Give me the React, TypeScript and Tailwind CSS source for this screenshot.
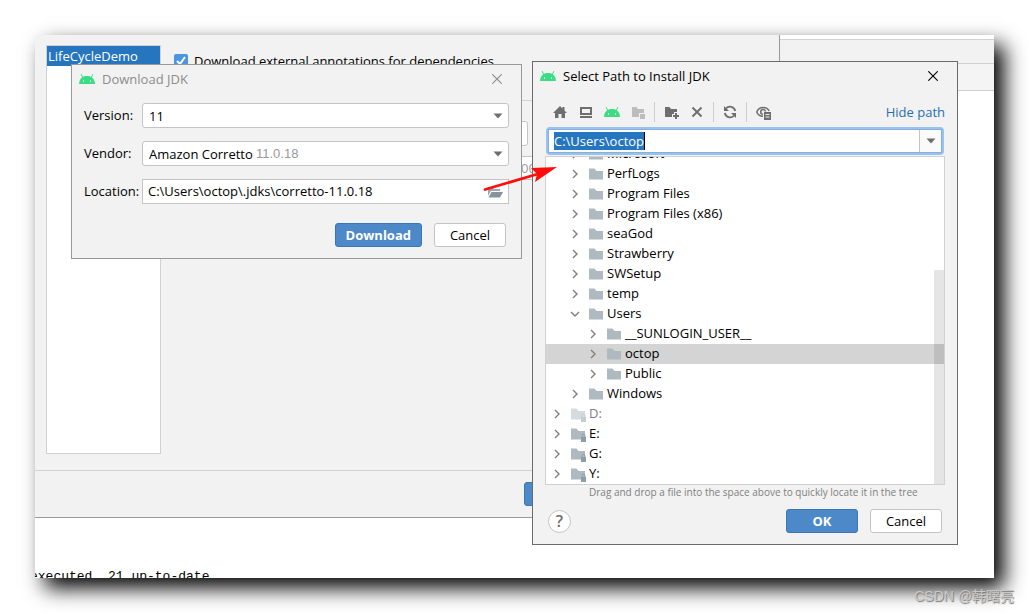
import React from "react";

type IconProps = { className?: string };

function AndroidIcon({ className = "" }: IconProps) {
  return (
    <svg viewBox="0 0 16 10" className={`h-[10px] w-4 shrink-0 ${className}`} aria-hidden="true">
      <path d="M0 10C.3 4.500 3.500 2 8 2S15.700 4.500 16 10z" fill="#3ddc84" />
      <path d="M4 4 2.300.5M12 4 13.700.5" stroke="#3ddc84" strokeWidth="1" strokeLinecap="round" />
      <circle cx="4.500" cy="7" r=".7" fill="#fff" />
      <circle cx="11.500" cy="7" r=".7" fill="#fff" />
    </svg>
  );
}

function CloseIcon() {
  return (
    <svg viewBox="0 0 10 10" className="size-[10px]" aria-hidden="true">
      <path d="M.3.3l9.400 9.400M9.700.3.3 9.700" stroke="currentColor" strokeWidth="1.100" />
    </svg>
  );
}

function HomeIcon() {
  return (
    <svg viewBox="0 0 16 16" className="size-4" aria-hidden="true">
      <path d="M8 2 1 9h2v5h3.500v-4h3v4H13V9h2l-2.500-2.500V3h-2v1.500z" fill="#6e6e6e" />
    </svg>
  );
}

function DesktopIcon() {
  return (
    <svg viewBox="0 0 16 16" className="size-4" aria-hidden="true">
      <path d="M2 3h12v8H2zM4 5v4h8V5z" fill="#6e6e6e" fillRule="evenodd" />
      <path d="M2 12h12v2H2z" fill="#6e6e6e" />
    </svg>
  );
}

function ModuleIcon() {
  return (
    <svg viewBox="0 0 16 16" className="size-4" aria-hidden="true">
      <path d="M2 3h4.500l1.500 2h6v4H9v4H2z" fill="#bdbdbd" />
      <path d="M10 10h5v5h-5z" fill="#bdbdbd" />
    </svg>
  );
}

function NewFolderIcon() {
  return (
    <svg viewBox="0 0 16 16" className="size-4" aria-hidden="true">
      <path d="M2 3h4.500l1.500 2h6v3h-3v2H9v3H2z" fill="#6e6e6e" />
      <path d="M12 9h2v2h2v2h-2v2h-2v-2h-2v-2h2z" fill="#6e6e6e" />
    </svg>
  );
}

function DeleteIcon() {
  return (
    <svg viewBox="0 0 16 16" className="size-4" aria-hidden="true">
      <path d="M3.500 3.500l9 9M12.500 3.500l-9 9" stroke="#6e6e6e" strokeWidth="1.900" />
    </svg>
  );
}

function RefreshIcon() {
  return (
    <svg viewBox="0 0 16 16" className="size-4" aria-hidden="true">
      <path d="M13.200 7A5.300 5.300 0 0 0 4 4.500M2.800 9A5.300 5.300 0 0 0 12 11.500" fill="none" stroke="#6e6e6e" strokeWidth="1.800" />
      <path d="M2 2v5h5zM14 14V9H9z" fill="#6e6e6e" />
    </svg>
  );
}

function ShowHiddenIcon() {
  return (
    <svg viewBox="0 0 16 16" className="size-4" aria-hidden="true">
      <path d="M8 12.300C4.500 12.300 2.500 10 1.800 8 2.800 5.200 5.200 3.500 8.200 3.500c2.900 0 4.900 1.300 6 3.500" fill="none" stroke="#6e6e6e" strokeWidth="1.500" />
      <path d="M8 10.300A2.400 2.400 0 1 1 10.500 7.500" fill="none" stroke="#6e6e6e" strokeWidth="1.500" />
      <path d="M9 8h7v8H9zM10.500 10v1h4v-1zM10.500 12.500v1h4v-1z" fill="#6e6e6e" fillRule="evenodd" />
    </svg>
  );
}

function FolderIcon({ locked = false, faded = false }: { locked?: boolean; faded?: boolean }) {
  return (
    <svg viewBox="0 0 16 16" className={`size-4 shrink-0 ${faded ? "opacity-50" : ""}`} aria-hidden="true">
      <path d="M1 2.500h5.500L8.500 5H15v8.500H1z" fill="#aeb9c0" />
      {locked && (
        <>
          <path d="M11 11h5v5h-5z" fill="#8f9da6" />
          <path d="M12 11V9.800a1.500 1.500 0 0 1 3 0V11" fill="none" stroke="#8f9da6" strokeWidth="1" />
        </>
      )}
    </svg>
  );
}

function OpenFolderIcon() {
  return (
    <svg viewBox="0 0 16 16" className="size-4" aria-hidden="true">
      <path d="M1 12V3h4.500l1.500 2h6v2H4z" fill="#9aa7b0" />
      <path d="M4.500 8H16l-3 5.500H1.500z" fill="#87939a" />
    </svg>
  );
}

function Caret() {
  return (
    <svg viewBox="0 0 10 6" className="h-[6px] w-[10px]" aria-hidden="true">
      <path d="M.5.500h9L5 5.500z" fill="#6e6e6e" />
    </svg>
  );
}

function Chevron({ open = false }: { open?: boolean }) {
  return (
    <svg viewBox="0 0 10 10" className="size-[10px] shrink-0" aria-hidden="true">
      <path d={open ? "M1 3l4 4 4-4" : "M3 1l4 4-4 4"} fill="none" stroke="#7f7f7f" strokeWidth="1.400" />
    </svg>
  );
}

function TitleBar({ title, muted = false }: { title: string; muted?: boolean }) {
  const tone = muted ? "text-[#8c8c8c]" : "text-black";
  return (
    <header className={`flex h-7 items-center gap-[7px] pr-[19px] pl-[7px] ${tone}`}>
      <AndroidIcon />
      <h2 className="flex-1">{title}</h2>
      <button type="button" aria-label="Close">
        <CloseIcon />
      </button>
    </header>
  );
}

function DialogButton({ children, primary = false }: { children: React.ReactNode; primary?: boolean }) {
  const look = primary
    ? "border-[#3a76b4] bg-[#4d89c8] font-bold text-white"
    : "border-[#c4c4c4] bg-white text-black";
  return (
    <button type="button" className={`flex h-6 min-w-[72px] items-center justify-center rounded-[3px] border px-[10px] ${look}`}>
      {children}
    </button>
  );
}

function FieldLabel({ htmlFor, children }: { htmlFor: string; children: React.ReactNode }) {
  return (
    <label htmlFor={htmlFor} className="pb-[2px]">
      {children}
    </label>
  );
}

function DropDown({ id, value, detail }: { id: string; value: string; detail?: string }) {
  return (
    <div className="relative">
      <select id={id} className="h-[25px] w-full appearance-none rounded-[3px] border border-[#c4c4c4] bg-white px-[6px]">
        <option>{value}</option>
      </select>
      {detail && (
        <span className="pointer-events-none absolute inset-y-0 left-[114px] flex items-center font-['Liberation_Sans',sans-serif] text-[#999999]">{detail}</span>
      )}
      <span className="pointer-events-none absolute inset-y-0 right-[6px] flex items-center">
        <Caret />
      </span>
    </div>
  );
}

function DownloadDialog() {
  return (
    <section className="absolute top-[29px] left-9 w-[451px] border border-[#999999] bg-[#f2f2f2] pb-[11px]">
      <TitleBar title="Download JDK" muted />
      <form className="px-3 pt-[10px]">
        <div className="grid grid-cols-[58px_1fr] items-center gap-y-[13px]">
          <FieldLabel htmlFor="version">Version:</FieldLabel>
          <DropDown id="version" value="11" />
          <FieldLabel htmlFor="vendor">Vendor:</FieldLabel>
          <DropDown id="vendor" value="Amazon Corretto" detail="11.0.18" />
          <FieldLabel htmlFor="location">Location:</FieldLabel>
          <div className="flex h-[25px] items-center border border-[#c4c4c4] bg-white pr-[5px] pl-[5px]">
            <input id="location" className="min-w-0 flex-1 pb-[2px] outline-none" defaultValue="C:\Users\octop\.jdks\corretto-11.0.18" />
            <button type="button" aria-label="Browse">
              <OpenFolderIcon />
            </button>
          </div>
        </div>
        <div className="mt-[19px] flex justify-end gap-3 pr-[3px]">
          <DialogButton primary>Download</DialogButton>
          <DialogButton>Cancel</DialogButton>
        </div>
      </form>
    </section>
  );
}

type TreeNode = {
  name: string;
  depth: 0 | 1 | 2;
  open?: boolean;
  selected?: boolean;
  faded?: boolean;
};

const nodes: TreeNode[] = [
  { name: "Microsoft", depth: 1 },
  { name: "PerfLogs", depth: 1 },
  { name: "Program Files", depth: 1 },
  { name: "Program Files (x86)", depth: 1 },
  { name: "seaGod", depth: 1 },
  { name: "Strawberry", depth: 1 },
  { name: "SWSetup", depth: 1 },
  { name: "temp", depth: 1 },
  { name: "Users", depth: 1, open: true },
  { name: "__SUNLOGIN_USER__", depth: 2 },
  { name: "octop", depth: 2, selected: true },
  { name: "Public", depth: 2 },
  { name: "Windows", depth: 1 },
  { name: "D:", depth: 0, faded: true },
  { name: "E:", depth: 0 },
  { name: "G:", depth: 0 },
  { name: "Y:", depth: 0 },
];

const indents = ["pl-[6px]", "pl-6", "pl-[42px]"];

function FileTree() {
  return (
    <div className="relative mt-px overflow-hidden border border-[#d1d1d1] bg-white">
      <ul role="tree" aria-label="Folders" className="-mt-[13px]">
        {nodes.map((node) => (
          <li
            key={node.name}
            role="treeitem"
            aria-level={node.depth + 1}
            aria-expanded={!!node.open}
            aria-selected={!!node.selected}
            className={`flex h-5 items-center leading-[18px] ${indents[node.depth]} ${node.selected ? "bg-[#d4d4d4]" : ""}`}
          >
            <Chevron open={node.open} />
            <span className="ml-2 flex h-5 items-start gap-[3px]">
              <span className="flex h-5 items-center">
                <FolderIcon locked={node.depth === 0} faded={node.faded} />
              </span>
              <span className={node.faded ? "text-[#84789a]" : "text-black"}>{node.name}</span>
            </span>
          </li>
        ))}
      </ul>
      <div className="absolute right-0 bottom-0 h-[214px] w-[10px] bg-black/10" />
    </div>
  );
}

function ToolButton({ label, children }: { label: string; children: React.ReactNode }) {
  return (
    <button type="button" aria-label={label} className="flex h-5 w-[26px] items-center justify-center">
      {children}
    </button>
  );
}

function Separator() {
  return <span className="mx-[3px] h-5 w-px bg-[#cdcdcd]" />;
}

function PathDialog() {
  return (
    <section className="absolute top-[26px] left-[497px] w-[426px] border border-[#6b6b6b] bg-[#f2f2f2] pb-[11px]">
      <TitleBar title="Select Path to Install JDK" />
      <div className="px-3 pt-3">
        <div className="flex items-center pl-[2px]">
          <ToolButton label="Home"><HomeIcon /></ToolButton>
          <ToolButton label="Desktop"><DesktopIcon /></ToolButton>
          <ToolButton label="Project"><AndroidIcon /></ToolButton>
          <ToolButton label="Module"><ModuleIcon /></ToolButton>
          <Separator />
          <ToolButton label="New folder"><NewFolderIcon /></ToolButton>
          <ToolButton label="Delete"><DeleteIcon /></ToolButton>
          <Separator />
          <ToolButton label="Refresh"><RefreshIcon /></ToolButton>
          <Separator />
          <ToolButton label="Show hidden files"><ShowHiddenIcon /></ToolButton>
          <a href="#path" className="ml-auto text-[#2470b3]">Hide path</a>
        </div>
        <div className="mx-px mt-[5px] flex h-7 rounded-[4px] border-2 border-[#97c3f3] bg-white">
          <div className="flex flex-1 items-center border border-[#87afda] pl-[5px]">
            <input
              id="path"
              aria-label="Path"
              className="h-[18px] border-r border-black bg-[#2675bf] text-white outline-none [field-sizing:content]"
              defaultValue="C:\Users\octop"
            />
            <button type="button" aria-label="Recent paths" className="ml-auto flex h-full w-[22px] items-center justify-center border-l border-[#c4c4c4] bg-[#fafafa]">
              <Caret />
            </button>
          </div>
        </div>
        <FileTree />
        <p className="pl-11 text-[10px] leading-[14px] text-[#808080]">
          Drag and drop a file into the space above to quickly locate it in the tree
        </p>
        <div className="mt-[10px] flex items-center gap-3 pr-[3px] pl-[3px]">
          <button type="button" aria-label="Help" className="mr-auto flex size-[23px] items-center justify-center rounded-full border border-[#c4c4c4] bg-white text-base font-semibold text-[#6e6e6e]">
            ?
          </button>
          <DialogButton primary>OK</DialogButton>
          <DialogButton>Cancel</DialogButton>
        </div>
      </div>
    </section>
  );
}

function SettingsWindow() {
  return (
    <section className="w-[745px] shrink-0 border-r border-b border-[#999999] bg-[#f2f2f2]">
      <div className="flex gap-[13px] border-b border-[#d1d1d1] pt-[10px] pb-4 pl-[11px]">
        <ul className="h-[409px] w-[115px] shrink-0 border border-[#d1d1d1] bg-white">
          <li className="h-5 bg-[#2675bf] pl-px leading-5 text-white">LifeCycleDemo</li>
        </ul>
        <div className="flex-1 pt-[6px]">
          <label className="flex h-5 items-center gap-[6px]">
            <span className="relative flex size-[14px]">
              <input type="checkbox" defaultChecked className="size-[14px] appearance-none rounded-[2px] bg-[#4a96e0]" />
              <svg viewBox="0 0 14 14" className="pointer-events-none absolute inset-0 size-[14px]" aria-hidden="true">
                <path d="M3 7l3 3 5-7" fill="none" stroke="#fff" strokeWidth="2" />
              </svg>
            </span>
            Download external annotations for dependencies
          </label>
          <hr className="mt-[29px] border-[#d1d1d1]" />
          <input aria-label="Search" className="mt-5 block h-[25px] w-[354px] rounded-[3px] border border-[#c4c4c4] bg-white" />
          <div className="mt-[10px] h-6 border-y border-[#c4c4c4] bg-white pl-[347px] leading-[22px] text-[#999999]">00</div>
        </div>
      </div>
      <div className="flex h-[46px] items-center pl-[489px]">
        <button type="button" aria-label="Apply" className="h-6 w-[72px] rounded-[3px] border border-[#3a76b4] bg-[#4d89c8]" />
      </div>
    </section>
  );
}

function EditorPane() {
  return (
    <div className="flex-1 bg-white pt-1">
      <div className="h-[25px] border-y border-[#d1d1d1] bg-[#f2f2f2]" />
      <div className="h-[27px] border-b border-[#d1d1d1] bg-[#f4f4f4]" />
    </div>
  );
}

export default function App() {
  return (
    <main className="relative min-h-screen overflow-hidden bg-white p-[35px] font-['Open_Sans','Noto_Sans_CJK_SC',sans-serif] text-[13px] leading-5 text-black">
      <div className="relative overflow-hidden bg-white shadow-[10px_10px_20px_#000]">
        <div className="flex">
          <SettingsWindow />
          <EditorPane />
        </div>
        <div className="h-[60px] overflow-hidden pt-[49px] font-['Liberation_Mono',monospace]">
          <p className="-ml-[5px] whitespace-nowrap">executed, 21 up-to-date</p>
        </div>
        <DownloadDialog />
        <PathDialog />
        <svg viewBox="0 0 76 28" className="pointer-events-none absolute top-[128px] left-[447px] h-7 w-[76px]" aria-hidden="true">
          <path d="M3 26.500 54 11.500" stroke="#ff0d0d" strokeWidth="2.700" strokeLinecap="round" />
          <path d="M75 4 49 5l6 6-2 8z" fill="#ff0d0d" />
        </svg>
      </div>
      <p className="absolute right-[15px] bottom-[7px] font-['Liberation_Sans','Noto_Sans_CJK_SC',sans-serif] text-[14px] text-[#c8c8c8] [text-shadow:1px_1px_1px_#777]">CSDN @韩曙亮</p>
    </main>
  );
}
